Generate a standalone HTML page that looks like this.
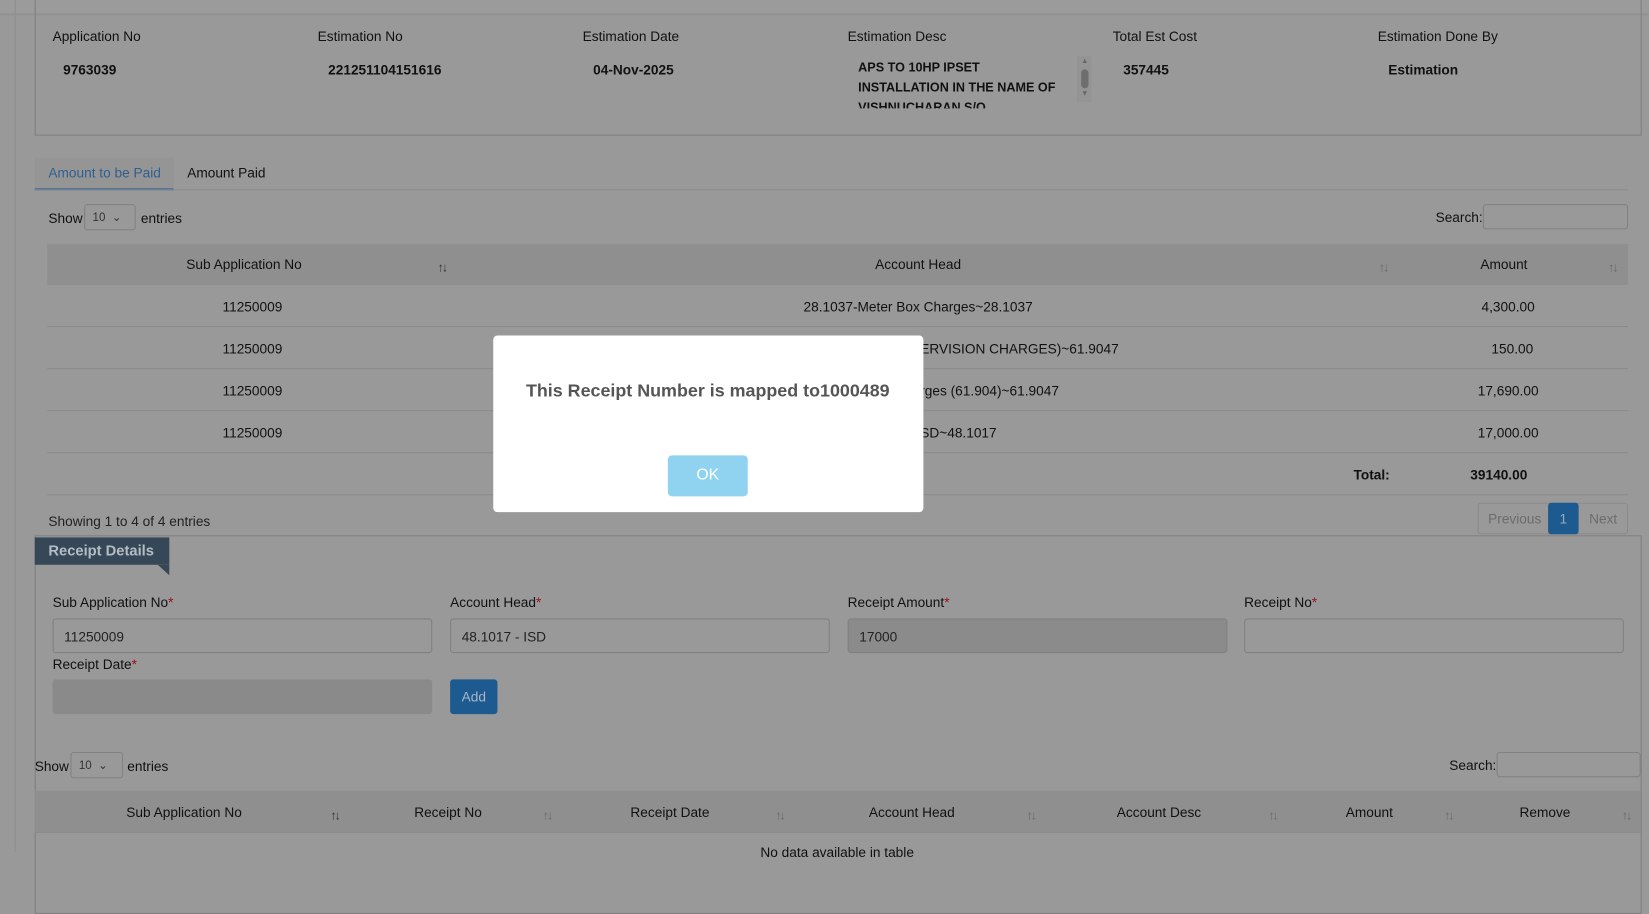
<!DOCTYPE html>
<html><head><meta charset="utf-8"><style>
*{box-sizing:border-box;margin:0;padding:0}
html,body{width:1649px;height:851px;overflow:hidden;background:#999}
#w{position:absolute;left:0;top:0;width:1568px;height:810px;transform:scale(1.0517);transform-origin:0 0;font-family:"Liberation Sans",sans-serif;font-size:13px;color:#111}
.a{position:absolute;white-space:nowrap}
.b{font-weight:bold}
.box{position:absolute;border:1px solid #7f7f7f}
.inp{position:absolute;border:1px solid #808080;border-radius:3px;height:33px;width:361px;padding:9px 10px;color:#222}
.th{position:absolute;background:#8f8f8f}
.row{position:absolute;left:45px;width:1503px;height:40px;border-bottom:1px solid #8a8a8a}
.s{position:absolute;color:#6a6a6a;font-size:12px;letter-spacing:-2px}
.red{color:#9a1020}
.c{position:absolute;transform:translateX(-50%);white-space:nowrap}
</style></head><body><div id="w">
<div class="a" style="left:0;top:0;width:1568px;height:13px;background:#9b9b9b;box-shadow:0 1px 2px rgba(0,0,0,.15)"></div>
<div class="a" style="left:14px;top:0;width:1px;height:810px;background:#8e8e8e"></div>
<div class="box" style="left:33px;top:-2px;width:1528px;height:131px"></div>
<div class="a" style="left:50px;top:27px">Application No</div>
<div class="a" style="left:302px;top:27px">Estimation No</div>
<div class="a" style="left:554px;top:27px">Estimation Date</div>
<div class="a" style="left:806px;top:27px">Estimation Desc</div>
<div class="a" style="left:1058px;top:27px">Total Est Cost</div>
<div class="a" style="left:1310px;top:27px">Estimation Done By</div>
<div class="a b" style="left:60px;top:59px">9763039</div>
<div class="a b" style="left:312px;top:59px">221251104151616</div>
<div class="a b" style="left:564px;top:59px">04-Nov-2025</div>
<div class="a b" style="left:816px;top:55px;line-height:19px;height:48px;overflow:hidden;white-space:normal;width:200px;font-size:12px">APS TO 10HP IPSET INSTALLATION IN THE NAME OF VISHNUCHARAN S/O</div>
<div class="a" style="left:1024px;top:53px;width:14px;height:44px;background:#949494"></div>
<div class="a" style="left:1028px;top:66px;width:7px;height:18px;border-radius:4px;background:#6e6e6e"></div>
<div class="a" style="left:1028px;top:55px;font-size:7px;color:#666">▲</div>
<div class="a" style="left:1028px;top:86px;font-size:7px;color:#666">▼</div>
<div class="a b" style="left:1068px;top:59px">357445</div>
<div class="a b" style="left:1320px;top:59px">Estimation</div>

<div class="a" style="left:33px;top:150px;width:132px;height:31px;background:#959595;border-bottom:2px solid #3c6b98"></div>
<div class="a" style="left:33px;top:180px;width:1515px;height:1px;background:#8a8a8a"></div>
<div class="a" style="left:46px;top:157px;color:#2f5f8f">Amount to be Paid</div>
<div class="a" style="left:178px;top:157px">Amount Paid</div>

<div class="a" style="left:46px;top:200px">Show</div>
<div class="a" style="left:80px;top:194px;width:49px;height:25px;border:1px solid #828282;border-radius:3px;font-size:11px;padding:5px 7px;color:#333">10 &nbsp;⌄</div>
<div class="a" style="left:134px;top:200px">entries</div>
<div class="a" style="left:1365px;top:199px">Search:</div>
<div class="a" style="left:1410px;top:194px;width:138px;height:24px;border:1px solid #828282;border-radius:3px"></div>

<div class="th" style="left:45px;top:232px;width:1503px;height:39px"></div>
<div class="c" style="left:232px;top:244px">Sub Application No</div>
<div class="c" style="left:873px;top:244px">Account Head</div>
<div class="c" style="left:1430px;top:244px">Amount</div>
<div class="s" style="left:416px;top:247px;color:#333">↑↓</div>
<div class="s" style="left:1311px;top:247px">↑↓</div>
<div class="s" style="left:1529px;top:247px">↑↓</div>

<div class="row" style="top:271px"></div><div class="row" style="top:311px"></div><div class="row" style="top:351px"></div><div class="row" style="top:391px"></div><div class="row" style="top:431px"></div>
<div class="c" style="left:240px;top:284px">11250009</div>
<div class="c" style="left:873px;top:284px">28.1037-Meter Box Charges~28.1037</div>
<div class="c" style="left:1434px;top:284px">4,300.00</div>
<div class="c" style="left:240px;top:324px">11250009</div>
<div class="a" style="left:875px;top:324px">ERVISION CHARGES)~61.9047</div>
<div class="c" style="left:1438px;top:324px">150.00</div>
<div class="c" style="left:240px;top:364px">11250009</div>
<div class="a" style="left:875px;top:364px">rges (61.904)~61.9047</div>
<div class="c" style="left:1434px;top:364px">17,690.00</div>
<div class="c" style="left:240px;top:404px">11250009</div>
<div class="a" style="left:875px;top:404px">SD~48.1017</div>
<div class="c" style="left:1434px;top:404px">17,000.00</div>
<div class="a b" style="left:1287px;top:444px">Total:</div>
<div class="a b" style="left:1398px;top:444px">39140.00</div>

<div class="a" style="left:46px;top:488px;color:#222">Showing 1 to 4 of 4 entries</div>
<div class="a" style="left:1405px;top:478px;width:143px;height:30px;border:1px solid #8a8a8a;border-radius:3px"></div>
<div class="a" style="left:1415px;top:486px;color:#6c6c6c">Previous</div>
<div class="a" style="left:1472px;top:478px;width:29px;height:30px;background:#1d5a90;border-radius:3px;color:#9ab;text-align:center;padding-top:8px">1</div>
<div class="a" style="left:1511px;top:486px;color:#6c6c6c">Next</div>

<div class="box" style="left:33px;top:509px;width:1528px;height:360px"></div>
<div class="a" style="left:33px;top:511px;width:128px;height:26px;background:#364858"></div>
<div class="a" style="left:150px;top:537px;width:0;height:0;border-left:11px solid transparent;border-top:10px solid #364858"></div>
<div class="a b" style="left:46px;top:515px;color:#b4bcc4;font-size:14px">Receipt Details</div>

<div class="a" style="left:50px;top:565px">Sub Application No<span class="red">*</span></div>
<div class="a" style="left:428px;top:565px">Account Head<span class="red">*</span></div>
<div class="a" style="left:806px;top:565px">Receipt Amount<span class="red">*</span></div>
<div class="a" style="left:1183px;top:565px">Receipt No<span class="red">*</span></div>
<div class="inp" style="left:50px;top:588px">11250009</div>
<div class="inp" style="left:428px;top:588px">48.1017 - ISD</div>
<div class="inp" style="left:806px;top:588px;background:#8b8b8b">17000</div>
<div class="inp" style="left:1183px;top:588px"></div>
<div class="a" style="left:50px;top:624px">Receipt Date<span class="red">*</span></div>
<div class="inp" style="left:50px;top:646px;background:#8a8a8a;border-color:#8a8a8a"></div>
<div class="a" style="left:428px;top:646px;width:45px;height:33px;background:#1d5a90;border-radius:3px;color:#a8b8c8;text-align:center;padding-top:9px">Add</div>

<div class="a" style="left:33px;top:721px">Show</div>
<div class="a" style="left:67px;top:715px;width:50px;height:25px;border:1px solid #828282;border-radius:3px;font-size:11px;padding:5px 7px;color:#333">10 &nbsp;⌄</div>
<div class="a" style="left:121px;top:721px">entries</div>
<div class="a" style="left:1378px;top:720px">Search:</div>
<div class="a" style="left:1423px;top:715px;width:137px;height:24px;border:1px solid #828282;border-radius:3px"></div>

<div class="th" style="left:33px;top:752px;width:1527px;height:40px"></div>
<div class="a" style="left:33px;top:791px;width:1527px;height:1px;background:#8a8a8a"></div>
<div class="c" style="left:175px;top:765px">Sub Application No</div>
<div class="c" style="left:426px;top:765px">Receipt No</div>
<div class="c" style="left:637px;top:765px">Receipt Date</div>
<div class="c" style="left:867px;top:765px">Account Head</div>
<div class="c" style="left:1102px;top:765px">Account Desc</div>
<div class="c" style="left:1302px;top:765px">Amount</div>
<div class="c" style="left:1469px;top:765px">Remove</div>
<div class="s" style="left:314px;top:768px;color:#333">↑↓</div>
<div class="s" style="left:516px;top:768px">↑↓</div>
<div class="s" style="left:737px;top:768px">↑↓</div>
<div class="s" style="left:976px;top:768px">↑↓</div>
<div class="s" style="left:1206px;top:768px">↑↓</div>
<div class="s" style="left:1373px;top:768px">↑↓</div>
<div class="s" style="left:1542px;top:768px">↑↓</div>
<div class="c" style="left:796px;top:803px">No data available in table</div>

<div class="a" style="left:469px;top:319px;width:409px;height:168px;background:#fff;border-radius:4px"></div>
<div class="c b" style="left:673px;top:362px;font-size:17px;color:#555">This Receipt Number is mapped to1000489</div>
<div class="a" style="left:635px;top:433px;width:76px;height:39px;background:#8fd3f1;border-radius:4px;color:#fff;font-size:15px;text-align:center;padding-top:10px">OK</div>
</div></body></html>
